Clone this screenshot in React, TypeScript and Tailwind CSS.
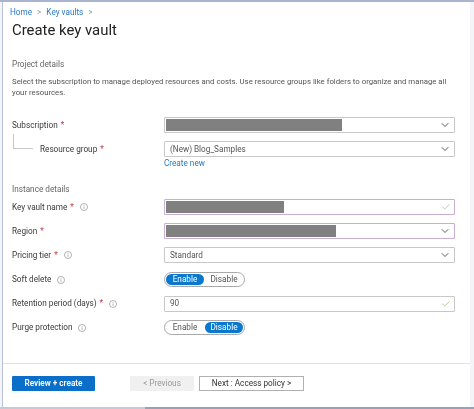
import { Check, ChevronDown } from "lucide-react";
import type { ReactNode } from "react";

const Req = () => <span className="ml-[3px] text-[#c8384a]">*</span>;

const Info = () => (
  <svg viewBox="0 0 10 10" className="ml-[6px] h-[8px] w-[8px] shrink-0 text-[#777]" fill="none" stroke="currentColor" strokeWidth="0.7">
    <circle cx="5" cy="5" r="4.4" />
    <path d="M5 4.3v3M5 2.6v.9" />
  </svg>
);

function Row({ label, children }: { label: ReactNode; children: ReactNode }) {
  return (
    <div className="flex h-[16px] items-center">
      <div className="flex w-[152px] shrink-0 items-center text-[#3a3a3a]">{label}</div>
      <div className="w-[291px]">{children}</div>
    </div>
  );
}

function Field({ purple, mask, icon, children }: { purple?: boolean; mask?: number; icon: "chevron" | "check"; children?: ReactNode }) {
  return (
    <div className={`flex h-[16px] items-center justify-between rounded-[1px] border-[1.5px] pl-[1px] pr-[3px] ${purple ? "border-[#c9aed4]" : "border-[#c8c8c8]"}`}>
      <div className="flex h-full min-w-0 flex-1 items-center py-[1px]">
        {mask ? <div className="h-full bg-[#808080]" style={{ width: mask }} /> : <span className="pl-[4px] text-[#555]">{children}</span>}
      </div>
      {icon === "chevron" ? (
        <ChevronDown className="h-[12px] w-[12px] text-[#333]" strokeWidth={1.6} />
      ) : (
        <Check className="h-[10px] w-[10px] text-[#8cc26a]" strokeWidth={1.6} />
      )}
    </div>
  );
}

function Toggle({ active }: { active: "Enable" | "Disable" }) {
  const item = (name: "Enable" | "Disable") => (
    <div className={`flex h-[11px] w-[38px] items-center justify-center rounded-full ${active === name ? "bg-[#0b78d0] text-white" : "text-[#555]"}`}>{name}</div>
  );
  return (
    <div className="flex h-[15px] w-[81px] items-center justify-between rounded-full border border-[#a9a9a9] px-[1px]">
      {item("Enable")}
      {item("Disable")}
    </div>
  );
}

export default function App() {
  return (
    <div className="h-[409px] w-[474px] overflow-hidden bg-[#f4f5f8] text-[8.2px] leading-[11px] [font-family:Roboto,sans-serif]">
      <div className="h-[2px] bg-[#aab4d0]" />
      <div className="ml-[2px] mr-[4px] h-[405px] border-l border-[#b9c2d8] bg-white pt-[5px] blur-[0.35px]">
        <div className="flex items-center pl-[7px] text-[#2b78c5]">
          <span>Home</span>
          <span className="mx-[5px] text-[#999]">&gt;</span>
          <span>Key vaults</span>
          <span className="mx-[5px] text-[#999]">&gt;</span>
        </div>
        <h1 className="mt-[2px] pl-[9px] text-[14.9px] leading-[20px] text-[#222]">Create key vault</h1>

        <div className="pl-[9px] pt-[19px]">
          <div className="text-[#666]">Project details</div>
          <p className="mt-[6px] w-[445px] text-[7.8px] text-[#555]">Select the subscription to manage deployed resources and costs. Use resource groups like folders to organize and manage all your resources.</p>

          <div className="mt-[19px] flex flex-col gap-[8px]">
            <Row label={<>Subscription<Req /></>}>
              <Field mask={176} icon="chevron" />
            </Row>
            <Row
              label={
                <span className="relative pl-[28px]">
                  <span className="absolute left-[1px] top-[-10px] h-[15px] w-[20px] border-b border-l border-[#c8c8c8]" />
                  Resource group<Req />
                </span>
              }
            >
              <Field icon="chevron">(New) Blog_Samples</Field>
            </Row>
          </div>
          <div className="ml-[152px] mt-[1px] text-[#1f78c1]">Create new</div>

          <div className="mt-[15px] text-[#666]">Instance details</div>
          <div className="mt-[4px] flex flex-col gap-[8.2px]">
            <Row label={<>Key vault name<Req /><Info /></>}>
              <Field purple mask={118} icon="check" />
            </Row>
            <Row label={<>Region<Req /></>}>
              <Field purple mask={170} icon="chevron" />
            </Row>
            <Row label={<>Pricing tier<Req /><Info /></>}>
              <Field icon="chevron">Standard</Field>
            </Row>
            <Row label={<>Soft delete<Info /></>}>
              <Toggle active="Enable" />
            </Row>
            <Row label={<>Retention period (days)<Req /><Info /></>}>
              <Field icon="check">90</Field>
            </Row>
            <Row label={<>Purge protection<Info /></>}>
              <Toggle active="Disable" />
            </Row>
          </div>
        </div>

        <div className="mt-[27px] flex h-[44px] items-start border-t-[1.5px] border-[#e2e2e2] pl-[9px] pt-[12px]">
          <button className="h-[15px] w-[83px] rounded-[1px] bg-[#0b6fc9] font-semibold text-white">Review + create</button>
          <button className="ml-[35px] h-[15px] w-[64px] bg-[#f0f0f0] text-[#999]">&lt; Previous</button>
          <button className="ml-[5px] h-[15px] w-[105px] border border-[#b0b0b0] bg-white text-[#333]">Next : Access policy &gt;</button>
        </div>
      </div>
      <div className="flex h-[2px]">
        <div className="w-[145px] bg-[#c6cad6]" />
        <div className="flex-1 bg-[#9aa0b5]" />
      </div>
    </div>
  );
}
